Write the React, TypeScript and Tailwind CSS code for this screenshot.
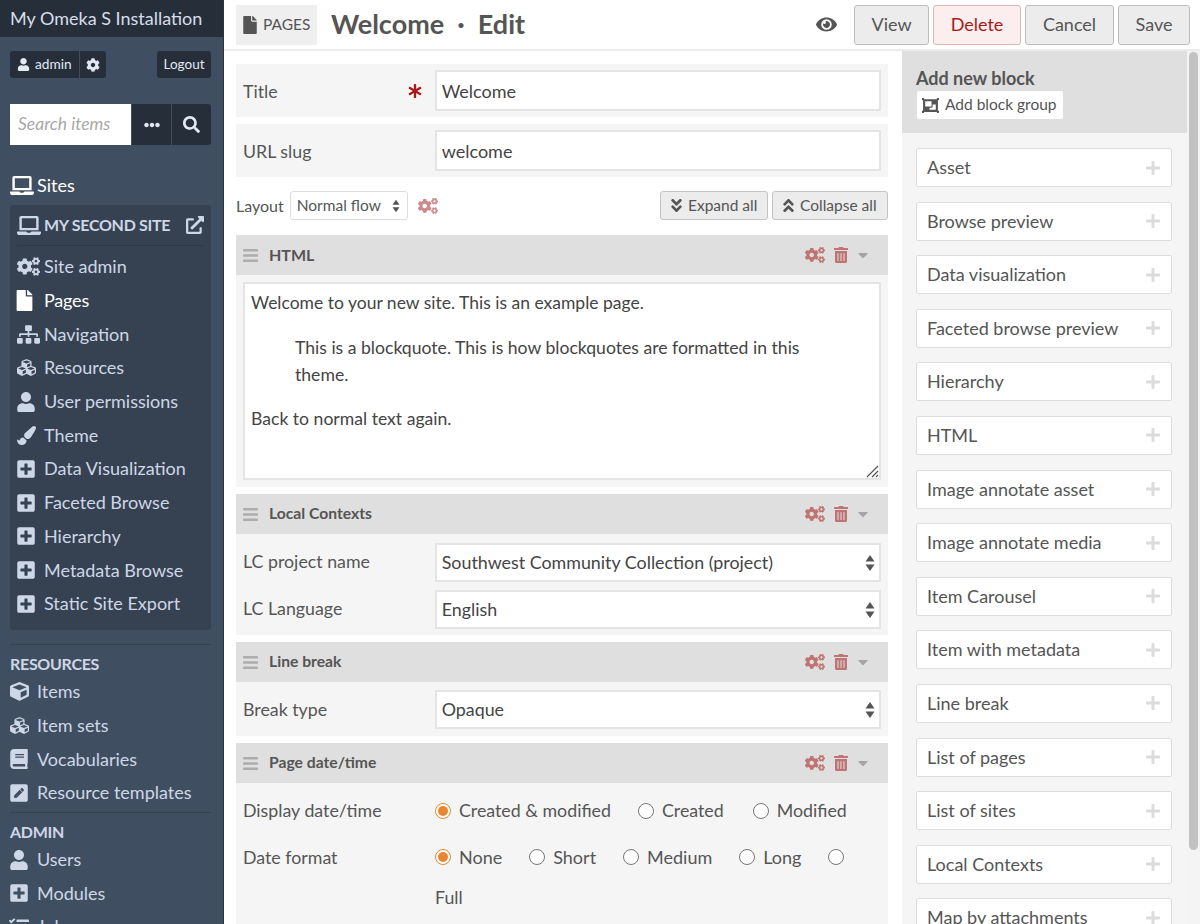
import React from "react";
import {
  FaUser, FaCog, FaEllipsisH, FaSearch, FaLaptop, FaExternalLinkAlt, FaCogs, FaFile, FaSitemap, FaCubes,
  FaPaintBrush, FaPlusSquare, FaCube, FaBook, FaPenSquare, FaEye, FaTrashAlt, FaAngleDoubleDown, FaAngleDoubleUp,
  FaBars, FaObjectGroup, FaCaretDown, FaPlus, FaAsterisk, FaTasks,
} from "react-icons/fa";

const Carets = ({ big }: { big?: boolean }) => (
  <svg viewBox="0 0 10 18" className={big ? "w-[10px] h-[18px] shrink-0" : "w-[8px] h-[14px] shrink-0"} fill="#555">
    <path d="M5 1 L9.5 7.5 H0.5 Z M5 17 L0.5 10.5 H9.5 Z" />
  </svg>
);

const SiteItem = ({ icon, label, active }: { icon: React.ReactNode; label: string; active?: boolean }) => (
  <div className={`h-[33.7px] flex items-center ${active ? "text-white" : "text-[#ced7e6]"}`}>
    <span className="w-[27px] shrink-0 flex items-center text-[20px]">{icon}</span>
    <span className={`text-[18px] ${active ? "tracking-[-0.2px]" : ""}`}>{label}</span>
  </div>
);

const NavItem = ({ icon, label }: { icon: React.ReactNode; label: string }) => (
  <div className="h-[33.7px] flex items-center text-[#ced7e6]">
    <span className="w-[27px] shrink-0 flex items-center text-[20px]">{icon}</span>
    <span className="text-[18px]">{label}</span>
  </div>
);

const Sidebar = () => (
  <aside className="w-[224px] shrink-0 h-full bg-[#404e61] border-r border-[#2b3441] overflow-hidden">
    <div className="h-[37px] bg-[#262e3a] px-[10px] flex items-center text-[18px] text-[#d6deeb]">My Omeka S Installation</div>
    <div className="pl-[10px] pr-[12px]">
      <div className="flex justify-between mt-[14px]">
        <div className="flex h-[27px] gap-[1px] text-[13.7px] text-[#e3e9f2]">
          <div className="bg-[#262e3a] rounded-l-[3px] w-[69px] flex items-center pl-[7px] gap-[5px]"><FaUser className="text-[13px]" />admin</div>
          <div className="bg-[#262e3a] rounded-r-[3px] w-[26px] flex items-center justify-center"><FaCog className="text-[14px]" /></div>
        </div>
        <div className="bg-[#262e3a] rounded-[3px] h-[27px] w-[54px] flex items-center justify-center text-[13.5px] text-[#e3e9f2]">Logout</div>
      </div>
      <div className="flex mt-[26px] h-[41px] gap-[1px]">
        <div className="w-[121px] bg-white flex items-center pl-[8px] italic text-[17.5px] text-[#a8a8a8]">Search items</div>
        <div className="w-[39px] bg-[#262e3a] flex items-center justify-center text-[#e3e9f2] text-[16px]"><FaEllipsisH /></div>
        <div className="w-[39px] bg-[#262e3a] rounded-r-[3px] flex items-center justify-center text-[#e3e9f2] text-[17px]"><FaSearch /></div>
      </div>
      <div className="flex items-center gap-[3px] text-white text-[18px] mt-[25px] h-[30px]"><FaLaptop className="text-[23px] w-[24px]" />Sites</div>
      <div className="bg-[#364252] rounded-[3px] mt-[5px] px-[7px] h-[425px]">
        <div className="flex items-center h-[41px] border-b border-[#2f3a49] justify-between text-[#ced7e6]">
          <span className="flex items-center gap-[3px] font-bold text-[16px] tracking-[-0.3px]"><FaLaptop className="text-[23px] w-[24px]" />MY SECOND SITE</span>
          <FaExternalLinkAlt className="text-[18px]" />
        </div>
        <div className="mt-[4px]">
          <SiteItem icon={<FaCogs className="text-[23px]" />} label="Site admin" />
          <SiteItem icon={<FaFile className="text-[21px] -ml-[3px]" />} label="Pages" active />
          <SiteItem icon={<FaSitemap className="text-[23px]" />} label="Navigation" />
          <SiteItem icon={<FaCubes className="text-[19px]" />} label="Resources" />
          <SiteItem icon={<FaUser className="-ml-[1px]" />} label="User permissions" />
          <SiteItem icon={<FaPaintBrush className="text-[19px]" />} label="Theme" />
          <SiteItem icon={<FaPlusSquare className="-ml-[1px]" />} label="Data Visualization" />
          <SiteItem icon={<FaPlusSquare className="-ml-[1px]" />} label="Faceted Browse" />
          <SiteItem icon={<FaPlusSquare className="-ml-[1px]" />} label="Hierarchy" />
          <SiteItem icon={<FaPlusSquare className="-ml-[1px]" />} label="Metadata Browse" />
          <SiteItem icon={<FaPlusSquare className="-ml-[1px]" />} label="Static Site Export" />
        </div>
      </div>
      <div className="border-t border-[#364252] mt-[14px] pt-[7px] font-bold text-[16px] tracking-[-0.3px] text-[#ced7e6] leading-[23px]">RESOURCES</div>
      <NavItem icon={<FaCube className="text-[19px]" />} label="Items" />
      <NavItem icon={<FaCubes className="text-[19px]" />} label="Item sets" />
      <NavItem icon={<FaBook className="-ml-[1px]" />} label="Vocabularies" />
      <NavItem icon={<FaPenSquare className="-ml-[1px]" />} label="Resource templates" />
      <div className="border-t border-[#364252] mt-[2px] pt-[7px] font-bold text-[16px] tracking-[-0.3px] text-[#ced7e6] leading-[23px]">ADMIN</div>
      <NavItem icon={<FaUser className="-ml-[1px]" />} label="Users" />
      <NavItem icon={<FaPlusSquare className="-ml-[1px]" />} label="Modules" />
      <NavItem icon={<FaTasks className="-ml-[1px]" />} label="Jobs" />
    </div>
  </aside>
);

const Btn = ({ label, w, danger }: { label: string; w: string; danger?: boolean }) => (
  <div className={`${w} h-[40px] rounded-[3px] border flex items-center justify-center text-[18px] ${danger ? "bg-[#fbeeee] border-[#e3b4b4] text-[#a91919]" : "bg-[#ececec] border-[#bdbdbd] text-[#555]"}`}>{label}</div>
);

const Header = () => (
  <header className="h-[51px] shrink-0 bg-white border-b-2 border-[#ececec] flex items-center pl-[12px] pr-[10px]">
    <div className="h-[40px] w-[81px] bg-[#efefef] flex items-center pl-[5px] gap-[4px] text-[15.5px] text-[#555]"><FaFile className="text-[18px]" />PAGES</div>
    <h1 className="ml-[14px] text-[27px] font-bold text-[#555] whitespace-pre">Welcome  ·  Edit</h1>
    <FaEye className="ml-auto text-[21px] text-[#555] mr-[17px]" />
    <div className="flex gap-[4px]">
      <Btn label="View" w="w-[75px]" />
      <Btn label="Delete" danger w="w-[88px]" />
      <Btn label="Cancel" w="w-[89px]" />
      <Btn label="Save" w="w-[72px]" />
    </div>
  </header>
);

const Field = ({ label, star, value }: { label: string; star?: boolean; value: string }) => (
  <div className="h-[53px] bg-[#f5f5f5] flex items-center px-[7px]">
    <span className="w-[165px] text-[17.8px] text-[#555] pt-[1px]">{label}</span>
    <span className="w-[27px] text-[#a91919] text-[14px] flex">{star && <FaAsterisk />}</span>
    <input readOnly value={value} className="w-[447px] h-[41px] bg-white border-2 border-[#e4e4e4] px-[5px] text-[18px] text-[#444] outline-none" />
  </div>
);

const BlockHead = ({ title, big }: { title: string; big?: boolean }) => (
  <div className="h-[40px] bg-[#dfdfdf] flex items-center px-[6px]">
    <FaBars className="text-[17px] text-[#adadad] w-[17px]" />
    <span className={`ml-[10px] font-bold text-[#555] ${big ? "text-[16px]" : "text-[15.7px]"}`}>{title}</span>
    <span className="ml-auto flex items-center text-[#bf7474]">
      <FaCogs className="text-[20px]" />
      <FaTrashAlt className="text-[16px] ml-[8px]" />
      <FaCaretDown className="text-[16px] ml-[6px] mr-[11px] text-[#a5a5a5]" />
    </span>
  </div>
);

const SelectRow = ({ label, value, nudge }: { label: string; value: string; nudge?: boolean }) => (
  <div className="h-[47px] flex items-center px-[7px]">
    <span className={`w-[192px] text-[17.8px] text-[#555] ${nudge ? "mb-[3px]" : ""}`}>{label}</span>
    <div className="w-[447px] h-[39px] bg-white border-2 border-[#e4e4e4] flex items-center justify-between pl-[5px] pr-[4px] text-[17.85px] text-[#444]">
      {value}<Carets big />
    </div>
  </div>
);

const Radio = ({ on, label, cls, big }: { on?: boolean; label?: string; cls: string; big?: boolean }) => (
  <span className={`inline-flex items-center ${cls}`}>
    <span className={`w-[16px] h-[16px] rounded-full border flex items-center justify-center bg-white shrink-0 ${on ? "border-[#e8872f]" : "border-[#777]"}`}>
      {on && <span className="w-[10px] h-[10px] rounded-full bg-[#e8872f]" />}
    </span>
    {label && <span className={`ml-[8px] text-[#555] ${big ? "text-[18px]" : "text-[17.8px]"}`}>{label}</span>}
  </span>
);

const MainForm = () => (
  <div className="w-[678px] shrink-0 h-full pl-[12px] pr-[14px] pt-[13px] overflow-hidden">
    <Field label="Title" star value="Welcome" />
    <div className="h-[7px]" />
    <Field label="URL slug" value="welcome" />
    <div className="h-[29px] mt-[14px] flex items-center text-[#555]">
      <span className="text-[16px]">Layout</span>
      <div className="ml-[6px] w-[118px] h-[29px] bg-white border border-[#ddd] rounded-[3px] flex items-center justify-between pl-[6px] pr-[7px] text-[15.5px]">
        Normal flow<Carets />
      </div>
      <FaCogs className="ml-[10px] text-[20px] text-[#cf8b8b]" />
      <div className="ml-auto flex gap-[4px] text-[15.5px]">
        <div className="w-[108px] h-[29px] bg-[#ececec] border border-[#c4c4c4] rounded-[3px] flex items-center pl-[7px] gap-[3px]"><FaAngleDoubleDown className="text-[17px]" />Expand all</div>
        <div className="w-[116px] h-[29px] bg-[#ececec] border border-[#c4c4c4] rounded-[3px] flex items-center pl-[7px] gap-[3px]"><FaAngleDoubleUp className="text-[17px]" />Collapse all</div>
      </div>
    </div>
    <div className="h-[15px]" />
    <BlockHead title="HTML" big />
    <div className="bg-[#f5f5f5] h-[212px] px-[7px] pt-[7px]">
      <div className="relative h-[198px] bg-white border-2 border-[#e4e4e4] px-[6px] text-[17.6px] leading-[27px] text-[#444]">
        <p className="mt-[5px] text-[17.5px]">Welcome to your new site. This is an example page.</p>
        <p className="mt-[18px] ml-[44px] mr-[60px]">This is a blockquote. This is how blockquotes are formatted in this theme.</p>
        <p className="mt-[17px]">Back to normal text again.</p>
        <svg viewBox="0 0 14 14" className="absolute right-0 bottom-0 w-[14px] h-[14px]" stroke="#555" strokeWidth="1.2">
          <path d="M2 13 L13 2 M7 13 L13 7 M11 13 L13 11" />
        </svg>
      </div>
    </div>
    <div className="h-[7px]" />
    <BlockHead title="Local Contexts" />
    <div className="bg-[#f5f5f5] h-[101px] pt-[5px]">
      <SelectRow nudge label="LC project name" value="Southwest Community Collection (project)" />
      <SelectRow nudge label="LC Language" value="English" />
    </div>
    <div className="h-[7px]" />
    <BlockHead title="Line break" />
    <div className="bg-[#f5f5f5] h-[54px] pt-[4px]">
      <SelectRow label="Break type" value="Opaque" />
    </div>
    <div className="h-[7px]" />
    <BlockHead title="Page date/time" />
    <div className="bg-[#f5f5f5] h-[200px] text-[17.8px] text-[#555]">
      <div className="h-[54px] pt-[1px] px-[7px] flex items-center">
        <span className="w-[192px]">Display date/time</span>
        <Radio on label="Created & modified" cls="" />
        <Radio label="Created" cls="ml-[27px]" />
        <Radio label="Modified" cls="ml-[29px]" />
      </div>
      <div className="h-[40px] px-[7px] flex items-center">
        <span className="w-[192px]">Date format</span>
        <Radio big on label="None" cls="" />
        <Radio big label="Short" cls="ml-[27px]" />
        <Radio big label="Medium" cls="ml-[27px]" />
        <Radio big label="Long" cls="ml-[27px]" />
        <Radio cls="ml-[27px]" />
      </div>
      <div className="h-[40px] flex items-center pl-[199px]">Full</div>
    </div>
  </div>
);

const blocks = ["Asset", "Browse preview", "Data visualization", "Faceted browse preview", "Hierarchy", "HTML", "Image annotate asset", "Image annotate media", "Item Carousel", "Item with metadata", "Line break", "List of pages", "List of sites", "Local Contexts", "Map by attachments"];

const RightPanel = () => (
  <div className="flex-1 h-full flex min-w-0 overflow-hidden">
    <div className="w-[285px] shrink-0 h-full bg-[#f5f5f5] overflow-hidden">
      <div className="h-[82px] bg-[#dfdfdf] px-[14px] pt-[15px]">
        <div className="font-bold text-[18px] leading-[25px] text-[#555]">Add new block</div>
        <div className="w-[146px] h-[28px] ml-[1px] bg-white rounded-[2px] flex items-center pl-[5px] text-[15.5px] text-[#555]">
          <FaObjectGroup className="text-[17px]" /><span className="ml-[6px]">Add block group</span>
        </div>
      </div>
      <div className="pl-[14px] pr-[15px] pt-[15px] flex flex-col gap-[14.6px]">
        {blocks.map((b) => (
          <div key={b} className="h-[39px] shrink-0 bg-white border border-[#ddd] rounded-[2px] flex items-center justify-between pl-[10px] pr-[10px] text-[18px] text-[#555]">
            {b}<FaPlus className="text-[16px] text-[#dcdcdc]" />
          </div>
        ))}
      </div>
    </div>
    <div className="w-[13px] shrink-0 bg-[#f4f4f4] pt-[1px] flex justify-center">
      <div className="w-[9px] h-[798px] rounded-full bg-[#c2c2c2]" />
    </div>
  </div>
);

export default function App() {
  return (
    <div className="w-[1200px] h-[924px] flex overflow-hidden bg-white font-['Lato','Liberation_Sans',sans-serif]">
      <Sidebar />
      <div className="flex-1 min-w-0 h-full flex flex-col">
        <Header />
        <div className="flex-1 min-h-0 flex">
          <MainForm />
          <RightPanel />
        </div>
      </div>
    </div>
  );
}
